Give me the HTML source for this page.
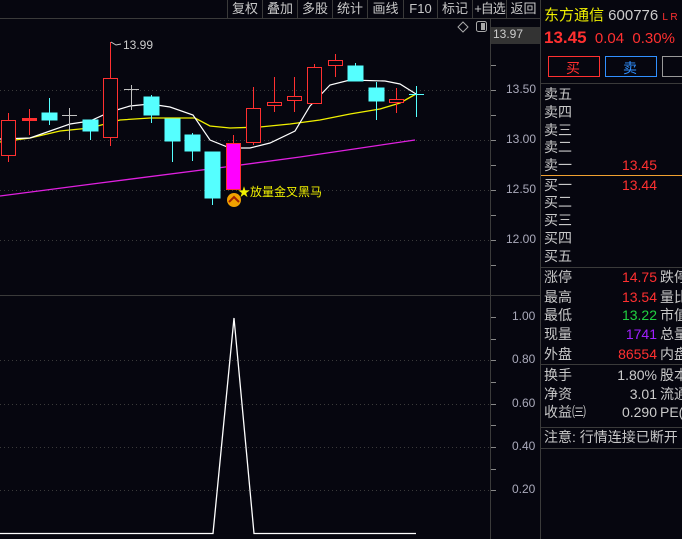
<!DOCTYPE html>
<html><head><meta charset="utf-8">
<style>
*{margin:0;padding:0;box-sizing:border-box}
body{width:682px;height:539px;background:#06060f;overflow:hidden;position:relative;font-family:"Liberation Sans","Noto Sans CJK SC",sans-serif;color:#c8c8c8}
.a{position:absolute;white-space:nowrap}
.tb{position:absolute;top:0;height:18px;font-size:13px;line-height:17px;color:#c8c8c8;text-align:center;border-left:1px solid #3a3a3a;white-space:nowrap;overflow:hidden}
.r{position:absolute;left:544px;font-size:14px;line-height:18px;color:#c8c8c8;white-space:nowrap}
.v{position:absolute;font-size:14px;line-height:18px;text-align:right;white-space:nowrap}
</style></head><body>
<svg class="a" style="left:0;top:0" width="682" height="539">
<line x1="0" y1="18.5" x2="540" y2="18.5" stroke="#3a3a3a"/>
<line x1="490.5" y1="18" x2="490.5" y2="539" stroke="#3a3a3a"/>
<line x1="540.5" y1="0" x2="540.5" y2="539" stroke="#3a3a3a"/>
<line x1="0" y1="295.5" x2="540" y2="295.5" stroke="#3a3a3a"/>
<rect x="491" y="27" width="49" height="17" fill="#333"/>
<g stroke="#3a3a3a" stroke-dasharray="1 3">
<line x1="0" y1="90.5" x2="490" y2="90.5"/><line x1="0" y1="140.5" x2="490" y2="140.5"/><line x1="0" y1="190.5" x2="490" y2="190.5"/><line x1="0" y1="240.5" x2="490" y2="240.5"/>
<line x1="0" y1="360.5" x2="490" y2="360.5"/><line x1="0" y1="404.5" x2="490" y2="404.5"/><line x1="0" y1="447.5" x2="490" y2="447.5"/><line x1="0" y1="490.5" x2="490" y2="490.5"/>
</g>
<g stroke="#888">
<line x1="491" y1="65.5" x2="496" y2="65.5"/><line x1="491" y1="90.5" x2="496" y2="90.5"/><line x1="491" y1="115.5" x2="496" y2="115.5"/><line x1="491" y1="140.5" x2="496" y2="140.5"/><line x1="491" y1="165.5" x2="496" y2="165.5"/><line x1="491" y1="190.5" x2="496" y2="190.5"/><line x1="491" y1="215.5" x2="496" y2="215.5"/><line x1="491" y1="240.5" x2="496" y2="240.5"/><line x1="491" y1="265.5" x2="496" y2="265.5"/>
<line x1="491" y1="317.5" x2="496" y2="317.5"/><line x1="491" y1="339.5" x2="496" y2="339.5"/><line x1="491" y1="360.5" x2="496" y2="360.5"/><line x1="491" y1="382.5" x2="496" y2="382.5"/><line x1="491" y1="404.5" x2="496" y2="404.5"/><line x1="491" y1="425.5" x2="496" y2="425.5"/><line x1="491" y1="447.5" x2="496" y2="447.5"/><line x1="491" y1="469.5" x2="496" y2="469.5"/><line x1="491" y1="490.5" x2="496" y2="490.5"/>
</g>
<polyline fill="none" stroke="#e020e0" stroke-width="1.3" points="0,196 100,183 233,166 300,157 415,140"/>
<polyline fill="none" stroke="#f0f000" stroke-width="1.3" points="0,142 30,138 60,131 90,128 120,120 150,118 195,118 210,126 230,128 260,127 290,124 320,120 350,114 380,109 400,103 416,94"/>
<polyline fill="none" stroke="#fff" stroke-width="1.2" points="0,139 30,138 50,131 70,124 90,121 110,112 130,106 150,104 170,107 193,115 210,140 230,148 250,148 270,143 295,131 310,106 330,85 350,80 385,81 400,84 416,94"/>
<g stroke="#ff3030" fill="none">
<line x1="8.5" y1="113" x2="8.5" y2="162"/><rect x="1.5" y="120.5" width="14" height="35" fill="#06060f"/>
<line x1="29.5" y1="109" x2="29.5" y2="135"/><rect x="22.5" y="118.5" width="14" height="2" fill="#ff3030"/>
<line x1="110.5" y1="42" x2="110.5" y2="146"/><rect x="103.5" y="78.5" width="14" height="59" fill="#06060f"/>
<line x1="253.5" y1="87" x2="253.5" y2="145"/><rect x="246.5" y="108.5" width="14" height="34" fill="#06060f"/>
<line x1="274.5" y1="77" x2="274.5" y2="112"/><rect x="267.5" y="102.5" width="14" height="3" fill="#06060f"/>
<line x1="294.5" y1="77" x2="294.5" y2="112"/><rect x="287.5" y="96.5" width="14" height="4" fill="#06060f"/>
<line x1="314.5" y1="64" x2="314.5" y2="103"/><rect x="307.5" y="67.5" width="14" height="36" fill="#06060f"/>
<line x1="335.5" y1="54" x2="335.5" y2="77"/><rect x="328.5" y="60.5" width="14" height="5" fill="#06060f"/>
<line x1="396.5" y1="88" x2="396.5" y2="113"/><rect x="389.5" y="99.5" width="14" height="3" fill="#06060f"/>
<line x1="233.5" y1="135" x2="233.5" y2="189"/><rect x="226.5" y="143.5" width="14" height="46" fill="#ff00ff"/>
</g>
<g stroke="#c0c0c0"><line x1="69.5" y1="108" x2="69.5" y2="140"/><line x1="62" y1="115.5" x2="77" y2="115.5"/>
<line x1="131.5" y1="85" x2="131.5" y2="110"/><line x1="124" y1="89.5" x2="139" y2="89.5"/></g>
<g fill="#55ffff" stroke="#55ffff">
<line x1="49.5" y1="98" x2="49.5" y2="125"/><rect x="42" y="113" width="15" height="7"/>
<line x1="90.5" y1="120" x2="90.5" y2="140"/><rect x="83" y="120" width="15" height="11"/>
<line x1="151.5" y1="95" x2="151.5" y2="123"/><rect x="144" y="97" width="15" height="18"/>
<line x1="172.5" y1="119" x2="172.5" y2="162"/><rect x="165" y="119" width="15" height="22"/>
<line x1="192.5" y1="133" x2="192.5" y2="161"/><rect x="185" y="135" width="15" height="16"/>
<line x1="212.5" y1="152" x2="212.5" y2="205"/><rect x="205" y="152" width="15" height="46"/>
<line x1="355.5" y1="63" x2="355.5" y2="81"/><rect x="348" y="66" width="15" height="15"/>
<line x1="376.5" y1="82" x2="376.5" y2="120"/><rect x="369" y="88" width="15" height="13"/>
<line x1="416.5" y1="86" x2="416.5" y2="117"/><line x1="409" y1="94.5" x2="424" y2="94.5"/>
</g>
<circle cx="234" cy="200" r="7" fill="#f0a000"/><path d="M229 202 L234 197 L239 202" stroke="#a02000" stroke-width="2" fill="none"/>
<path d="M111 42 L116 45 L121 44" stroke="#ccc" fill="none"/>
<path d="M463 22 L468 27 L463 32 L458 27 Z" stroke="#aaa" fill="none"/>
<rect x="476.5" y="21.5" width="10" height="10" rx="2" stroke="#aaa" fill="none"/><rect x="481" y="23" width="4" height="7" fill="#aaa"/>
<polyline fill="none" stroke="#fff" stroke-width="1.3" points="0,533.5 213,533.5 234,318 254,533.5 416,533.5"/>
<line x1="541" y1="83.5" x2="682" y2="83.5" stroke="#3a3a3a"/>
<line x1="541" y1="175.5" x2="682" y2="175.5" stroke="#f0a030"/>
<line x1="541" y1="267.5" x2="682" y2="267.5" stroke="#3a3a3a"/>
<line x1="541" y1="364.5" x2="682" y2="364.5" stroke="#3a3a3a"/>
<line x1="541" y1="427.5" x2="682" y2="427.5" stroke="#3a3a3a"/>
<line x1="541" y1="448.5" x2="682" y2="448.5" stroke="#3a3a3a"/>
<rect x="548.5" y="56.5" width="51" height="20" stroke="#ff3030" fill="none"/>
<rect x="605.5" y="56.5" width="51" height="20" stroke="#3090ff" fill="none"/>
<rect x="662.5" y="56.5" width="30" height="20" stroke="#999" fill="none"/>
</svg>
<div class="tb" style="left:227px;width:35px">复权</div>
<div class="tb" style="left:262px;width:35px">叠加</div>
<div class="tb" style="left:297px;width:35px">多股</div>
<div class="tb" style="left:332px;width:35px">统计</div>
<div class="tb" style="left:367px;width:36px">画线</div>
<div class="tb" style="left:403px;width:34px">F10</div>
<div class="tb" style="left:437px;width:35px">标记</div>
<div class="tb" style="left:472px;width:34px;letter-spacing:-1px">+自选</div>
<div class="tb" style="left:506px;width:34px">返回</div>
<div class="a" style="left:123px;top:38px;font-size:12px;color:#ccc">13.99</div>
<div class="a" style="left:238px;top:183px;font-size:12px;color:#f0f000">★放量金叉黑马</div>
<div class="a" style="left:493px;top:27px;font-size:12px;color:#ccc">13.97</div>
<div class="a" style="left:506px;top:82px;font-size:12px;color:#aab">13.50</div>
<div class="a" style="left:506px;top:132px;font-size:12px;color:#aab">13.00</div>
<div class="a" style="left:506px;top:182px;font-size:12px;color:#aab">12.50</div>
<div class="a" style="left:506px;top:232px;font-size:12px;color:#aab">12.00</div>
<div class="a" style="left:512px;top:309px;font-size:12px;color:#aab">1.00</div>
<div class="a" style="left:512px;top:352px;font-size:12px;color:#aab">0.80</div>
<div class="a" style="left:512px;top:396px;font-size:12px;color:#aab">0.60</div>
<div class="a" style="left:512px;top:439px;font-size:12px;color:#aab">0.40</div>
<div class="a" style="left:512px;top:482px;font-size:12px;color:#aab">0.20</div>
<div class="a" style="left:544px;top:4px;font-size:15px;color:#f0f000">东方通信 <span style="color:#ccc">600776</span> <span style="color:#ff3030;font-size:10px">L R</span></div>
<div class="a" style="left:544px;top:28px;font-size:15px;color:#ff3030"><b style="font-size:17px">13.45</b> &nbsp;0.04 &nbsp;0.30%</div>
<div class="a" style="left:566px;top:58px;font-size:14px;color:#ff3030">买</div>
<div class="a" style="left:623px;top:58px;font-size:14px;color:#3090ff">卖</div>
<div class="r" style="top:85px">卖五</div><div class="r" style="top:103px">卖四</div><div class="r" style="top:121px">卖三</div><div class="r" style="top:138px">卖二</div><div class="r" style="top:156px">卖一</div>
<div class="v" style="left:590px;width:67px;top:156px;color:#ff3030">13.45</div>
<div class="r" style="top:176px">买一</div>
<div class="v" style="left:590px;width:67px;top:176px;color:#ff3030">13.44</div>
<div class="r" style="top:193px">买二</div><div class="r" style="top:211px">买三</div><div class="r" style="top:229px">买四</div><div class="r" style="top:247px">买五</div>
<div class="r" style="top:268px">涨停</div><div class="r" style="top:288px">最高</div><div class="r" style="top:306px">最低</div><div class="r" style="top:325px">现量</div><div class="r" style="top:345px">外盘</div>
<div class="v" style="left:590px;width:67px;top:268px;color:#ff3030">14.75</div>
<div class="v" style="left:590px;width:67px;top:288px;color:#ff3030">13.54</div>
<div class="v" style="left:590px;width:67px;top:306px;color:#20d040">13.22</div>
<div class="v" style="left:590px;width:67px;top:325px;color:#a020ff">1741</div>
<div class="v" style="left:590px;width:67px;top:345px;color:#ff3030">86554</div>
<div class="r" style="left:660px;top:268px">跌停</div><div class="r" style="left:660px;top:288px">量比</div><div class="r" style="left:660px;top:306px">市值</div><div class="r" style="left:660px;top:325px">总量</div><div class="r" style="left:660px;top:345px">内盘</div>
<div class="r" style="top:366px">换手</div><div class="r" style="top:385px">净资</div><div class="r" style="top:403px">收益㈢</div>
<div class="v" style="left:590px;width:67px;top:366px;color:#ccc">1.80%</div>
<div class="v" style="left:590px;width:67px;top:385px;color:#ccc">3.01</div>
<div class="v" style="left:590px;width:67px;top:403px;color:#ccc">0.290</div>
<div class="r" style="left:660px;top:366px">股本</div><div class="r" style="left:660px;top:385px">流通</div><div class="r" style="left:660px;top:403px">PE(</div>
<div class="r" style="top:428px">注意: 行情连接已断开</div>
</body></html>
